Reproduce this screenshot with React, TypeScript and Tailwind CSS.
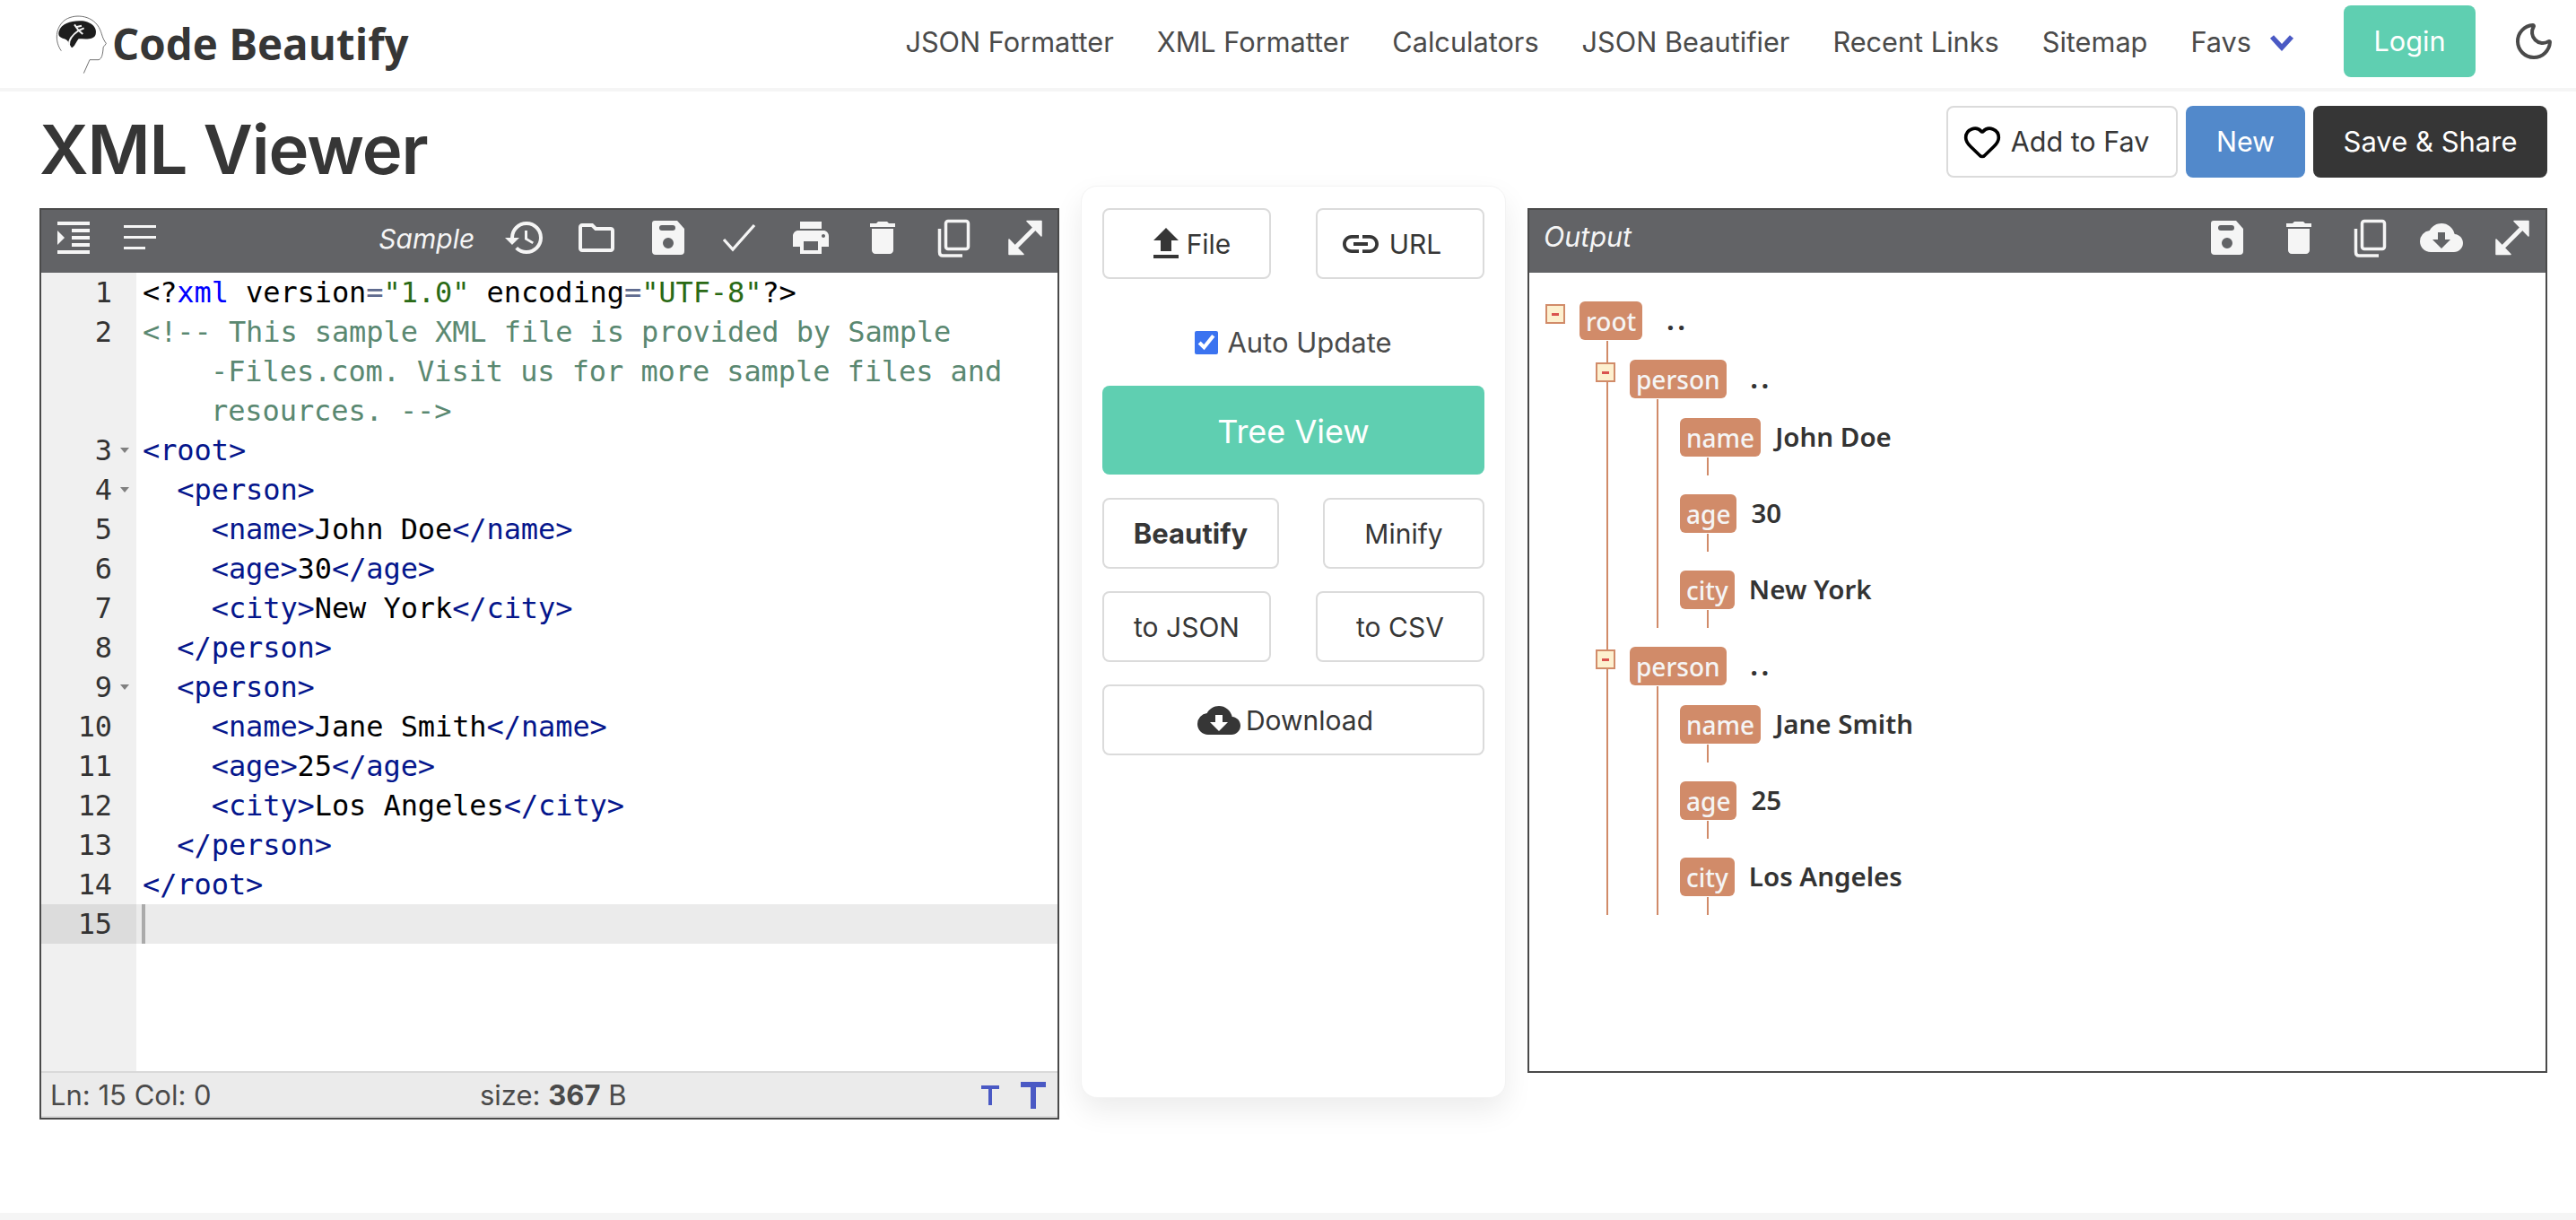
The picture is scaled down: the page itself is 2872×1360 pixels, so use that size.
import { Heart, Moon } from 'lucide-react'
import {
  MdCloudDownload,
  MdDelete,
  MdFileUpload,
  MdFormatIndentIncrease,
  MdHistory,
  MdLink,
  MdOutlineFolder,
  MdPrint,
} from 'react-icons/md'
import type { ReactNode } from 'react'

const NAV = ['JSON Formatter', 'XML Formatter', 'Calculators', 'JSON Beautifier', 'Recent Links', 'Sitemap']

function Logo() {
  return (
    <div className="flex items-center">
      <svg width="70" height="80" viewBox="0 0 210 240" className="ml-[-1px] mt-[2px] shrink-0">
        <path d="M40 140 C18 110 18 60 55 35 C90 14 150 22 170 70 C178 88 176 96 190 115 C186 124 178 125 180 135 C178 152 176 166 165 170 L135 170 L115 215" fill="none" stroke="#555" strokeWidth="2.5" />
        <path d="M32 75 C40 50 70 40 100 40 C135 38 162 60 155 85 C150 105 120 100 98 100 C88 112 86 125 75 130 C66 118 66 106 50 100 C35 95 28 90 32 75Z" fill="#1d1d1d" />
        <path d="M66 120 C64 100 78 86 98 72 L84 52 M98 72 L116 64 M98 72 L112 84 M92 60 L108 56" fill="none" stroke="#f4f4f4" strokeWidth="6" />
      </svg>
      <span className="font-['Open_Sans'] text-[47.5px] font-bold leading-none text-[#363636]">Code Beautify</span>
    </div>
  )
}

function Navbar() {
  return (
    <nav className="flex h-[102px] shrink-0 items-start border-b-4 border-[#f5f5f5] pl-[56px] pr-[23px]">
      <div className="flex h-[98px] items-center">
        <Logo />
      </div>
      <div className="ml-auto flex h-[92px] items-center text-[30.7px] text-[#4a4a4a]">
        {NAV.map(n => (
          <span key={n} className="mr-[48px] pt-[3px]">{n}</span>
        ))}
        <span className="pt-[3px]">Favs</span>
        <svg width="28" height="20" viewBox="0 0 28 20" className="ml-[20px] mr-[55px] mt-[3px]">
          <path d="M3 3 L14 15 L25 3" fill="none" stroke="#4a59c4" strokeWidth="5.5" />
        </svg>
        <span className="mr-[41px] flex h-[80px] w-[147px] items-center justify-center rounded-[8px] bg-[#5fcfb1] text-white">Login</span>
        <Moon size={48} strokeWidth={2} className="text-[#4a4a4a]" />
      </div>
    </nav>
  )
}

function SaveIcon() {
  return (
    <svg width="48" height="48" viewBox="0 0 48 48">
      <path fillRule="evenodd" d="M9 5 H34 L42 14 V39 Q42 43 38 43 H10 Q6 43 6 39 V8 Q6 5 9 5Z M17 10 Q14 10 14 13 Q14 16 17 16 H29 Q32 16 32 13 Q32 10 29 10Z M24 24 A6 6 0 1 0 24 36 A6 6 0 1 0 24 24Z" fill="currentColor" />
    </svg>
  )
}

function CopyIcon() {
  return (
    <svg width="48" height="48" viewBox="0 0 48 48">
      <rect x="15.5" y="5.5" width="25" height="31" rx="2.5" fill="none" stroke="currentColor" strokeWidth="3.5" />
      <path d="M8.5 14 V40 Q8.5 44 12 44 H34" fill="none" stroke="currentColor" strokeWidth="3.5" />
    </svg>
  )
}

function ExpandIcon() {
  return (
    <svg width="48" height="48" viewBox="0 0 48 48">
      <path d="M12 36 L36 12" stroke="currentColor" strokeWidth="5" />
      <path d="M42 5.5 V22 L26 5.5Z M6 42.5 V26 L22 42.5Z" fill="currentColor" stroke="currentColor" strokeWidth="1.5" strokeLinejoin="round" />
    </svg>
  )
}

function ThinCheck() {
  return (
    <svg width="48" height="48" viewBox="0 0 48 48">
      <path d="M7 26 L17 37 L41 10" fill="none" stroke="currentColor" strokeWidth="3.2" />
    </svg>
  )
}

function AlignIcon() {
  return (
    <svg width="36" height="30" viewBox="0 0 36 30">
      <rect x="0" y="1" width="36" height="3" fill="currentColor" />
      <rect x="0" y="13" width="36" height="3" fill="currentColor" />
      <rect x="0" y="25" width="24" height="3" fill="currentColor" />
    </svg>
  )
}

const Tag = ({ children }: { children: ReactNode }) => <span className="text-[#05168c]">{children}</span>

const CODE: ReactNode[] = [
  <>
    {'<?'}<span className="text-[#0000ff]">xml</span> version<span className="text-[#5f6b8f]">=</span>
    <span className="text-[#2a6a15]">"1.0"</span> encoding<span className="text-[#5f6b8f]">=</span>
    <span className="text-[#2a6a15]">"UTF-8"</span>{'?>'}
  </>,
  <span className="text-[#5a8871]">{'<!-- This sample XML file is provided by Sample'}</span>,
  <span className="pl-[76px] text-[#5a8871]">{'-Files.com. Visit us for more sample files and'}</span>,
  <span className="pl-[76px] text-[#5a8871]">{'resources. -->'}</span>,
  <Tag>{'<root>'}</Tag>,
  <Tag>{'  <person>'}</Tag>,
  <><Tag>{'    <name>'}</Tag>John Doe<Tag>{'</name>'}</Tag></>,
  <><Tag>{'    <age>'}</Tag>30<Tag>{'</age>'}</Tag></>,
  <><Tag>{'    <city>'}</Tag>New York<Tag>{'</city>'}</Tag></>,
  <Tag>{'  </person>'}</Tag>,
  <Tag>{'  <person>'}</Tag>,
  <><Tag>{'    <name>'}</Tag>Jane Smith<Tag>{'</name>'}</Tag></>,
  <><Tag>{'    <age>'}</Tag>25<Tag>{'</age>'}</Tag></>,
  <><Tag>{'    <city>'}</Tag>Los Angeles<Tag>{'</city>'}</Tag></>,
  <Tag>{'  </person>'}</Tag>,
  <Tag>{'</root>'}</Tag>,
]

const GUTTER = ['1', '2', '', '', '3', '4', '5', '6', '7', '8', '9', '10', '11', '12', '13', '14']
const FOLDS = ['3', '4', '9']

function Editor() {
  return (
    <div className="mt-[25px] flex h-[1016px] w-[1137px] shrink-0 flex-col border-2 border-[#4a4a4a]">
      <div className="flex h-[70px] shrink-0 items-start bg-[#626366] pl-[12px] pr-[12px] pt-[7px] text-[#f5f5f5]">
        <MdFormatIndentIncrease size={48} />
        <div className="ml-[32px] mt-[9px]"><AlignIcon /></div>
        <span className="ml-auto mr-[32px] mt-[3px] font-['Inter'] text-[30px] italic">Sample</span>
        <div className="flex gap-[31.7px]">
          <MdHistory size={48} />
          <MdOutlineFolder size={48} />
          <SaveIcon />
          <ThinCheck />
          <MdPrint size={48} />
          <MdDelete size={48} />
          <CopyIcon />
          <ExpandIcon />
        </div>
      </div>
      <div className="flex min-h-0 flex-1 font-['DejaVu_Sans_Mono'] text-[32px] leading-[44px] tracking-[-0.09px]">
        <div className="w-[106px] shrink-0 bg-[#f0f0f0] text-[#333]">
          {GUTTER.map((g, i) => (
            <div key={i} className="relative h-[44px] pr-[27px] text-right">
              {g}
              {FOLDS.includes(g) && (
                <svg width="10" height="6" viewBox="0 0 10 6" className="absolute left-[88px] top-[19px]">
                  <path d="M0 0 H10 L5 6Z" fill="#808080" />
                </svg>
              )}
            </div>
          ))}
          <div className="h-[44px] bg-[#dcdcdc] pr-[27px] text-right">15</div>
        </div>
        <div className="min-w-0 flex-1 bg-white text-black">
          {CODE.map((c, i) => (
            <div key={i} className="h-[44px] whitespace-pre pl-[7px]">{c}</div>
          ))}
          <div className="flex h-[44px] bg-[#ebebeb] pl-[6px]">
            <span className="h-[44px] w-[4px] bg-[#aaaaaa]" />
          </div>
        </div>
      </div>
      <div className="flex h-[52px] shrink-0 items-center border-y-2 border-t-[#d9d9d9] border-b-[#d9d9d9] bg-[#ebebeb] pl-[10px] pt-[2px] text-[31px] text-[#4a4a4a]">
        <span className="w-[479px]">Ln: 15 Col: 0</span>
        <span>size: <b className="font-bold">367</b> B</span>
        <svg width="20" height="22" viewBox="0 0 20 22" className="ml-auto">
          <path d="M0 0 H20 V4 H12 V22 H8 V4 H0Z" fill="#4a59c4" />
        </svg>
        <svg width="28" height="30" viewBox="0 0 28 30" className="ml-[24px] mr-[13px]">
          <path d="M0 0 H28 V6 H17 V30 H11 V6 H0Z" fill="#4a59c4" />
        </svg>
      </div>
    </div>
  )
}

const BTN = 'flex h-[79px] items-center justify-center rounded-[8px] border-2 border-[#dbdbdb] bg-white pt-[1px] text-[30px] text-[#363636]'

function Controls() {
  return (
    <div className="ml-[24px] flex h-[1017px] w-[474px] shrink-0 flex-col rounded-[18px] border border-[#f3f3f3] bg-white px-[23px] pt-[24px] font-['Inter'] shadow-[0_14px_32px_rgba(0,0,0,0.08)]">
      <div className="flex justify-between">
        <div className={`${BTN} w-[188px] pl-[3px]`}>
          <MdFileUpload size={48} className="ml-[-1px] mr-[-1px]" />
          <span className="mt-[1px]">File</span>
        </div>
        <div className={`${BTN} w-[188px] pr-[22px]`}>
          <MdLink size={48} className="mr-[8px]" />
          <span className="mt-[1px]">URL</span>
        </div>
      </div>
      <label className="mt-[57px] flex h-[26px] items-center justify-center pt-[2px] text-[31px] text-[#4a4a4a]">
        <input type="checkbox" defaultChecked className="m-0 mr-[10px] h-[26px] w-[26px] accent-[#3b73f0]" />
        Auto Update
      </label>
      <div className="mt-[36px] flex h-[99px] items-center justify-center rounded-[8px] bg-[#5fcfb1] pt-[2px] text-[36px] text-white">Tree View</div>
      <div className="mt-[26px] flex justify-between">
        <div className={`${BTN} w-[197px] text-[31px] font-bold`}>Beautify</div>
        <div className={`${BTN} w-[180px]`}>Minify</div>
      </div>
      <div className="mt-[25px] flex justify-between">
        <div className={`${BTN} w-[188px]`}>to JSON</div>
        <div className={`${BTN} w-[188px]`}>to CSV</div>
      </div>
      <div className={`${BTN} mt-[25px] pr-[18px]`}>
        <MdCloudDownload size={48} className="mr-[6px]" />
        Download
      </div>
    </div>
  )
}

function Toggle() {
  return (
    <span className="absolute left-[-38px] top-[3px] flex h-[22px] w-[22px] items-center justify-center border-2 border-[#d18b69] bg-[#fdf0cf]">
      <span className="h-[3px] w-[8px] bg-[#d9534f]" />
    </span>
  )
}

function TagBox({ children }: { children: ReactNode }) {
  return <span className="flex h-[43px] items-center rounded-[6px] bg-[#d18b69] px-[7px] text-[28px] font-medium text-[#f5f5f5]">{children}</span>
}

function Branch({ name, children }: { name: string; children: ReactNode }) {
  return (
    <div>
      <div className="relative flex h-[43px] items-center">
        <Toggle />
        <TagBox>{name}</TagBox>
        <span className="ml-[27px] font-bold tracking-[4px]">..</span>
      </div>
      <div className="ml-[30px] mt-[1px] flex flex-col gap-[21px] border-l-2 border-[#d18b69] pl-[24px] pt-[21px]">{children}</div>
    </div>
  )
}

function Leaf({ name, value }: { name: string; value: string }) {
  return (
    <div>
      <div className="flex h-[43px] items-center">
        <TagBox>{name}</TagBox>
        <span className="ml-[16px] font-semibold">{value}</span>
      </div>
      <div className="ml-[30px] mt-[1px] h-[20px] w-[2px] bg-[#d18b69]" />
    </div>
  )
}

function Output() {
  return (
    <div className="ml-[24px] mt-[25px] flex h-[964px] min-w-0 flex-1 flex-col border-2 border-[#4a4a4a]">
      <div className="flex h-[70px] shrink-0 items-start bg-[#626366] pl-[16px] pr-[13px] pt-[7px] text-[#f5f5f5]">
        <span className="font-['Inter'] text-[30.5px] italic">Output</span>
        <div className="ml-auto flex gap-[31.4px]">
          <SaveIcon />
          <MdDelete size={48} />
          <CopyIcon />
          <MdCloudDownload size={48} />
          <ExpandIcon />
        </div>
      </div>
      <div className="flex-1 bg-white pl-[56px] pt-[32px] font-['Noto_Sans'] text-[29.5px] text-[#333]">
        <Branch name="root">
          <Branch name="person">
            <Leaf name="name" value="John Doe" />
            <Leaf name="age" value="30" />
            <Leaf name="city" value="New York" />
          </Branch>
          <Branch name="person">
            <Leaf name="name" value="Jane Smith" />
            <Leaf name="age" value="25" />
            <Leaf name="city" value="Los Angeles" />
          </Branch>
        </Branch>
      </div>
    </div>
  )
}

export default function App() {
  return (
    <div className="flex h-[1360px] flex-col overflow-hidden bg-white font-['Inter'] text-[#363636]">
      <Navbar />
      <div className="flex h-[105px] shrink-0 items-start justify-between pl-[44px] pr-[32px]">
        <h1 className="mt-[18px] text-[76px] font-semibold leading-[92px] tracking-[-1.1px] text-[#363636]">XML Viewer</h1>
        <div className="mt-[16px] flex gap-[9px] text-[30.5px]">
          <div className="flex h-[80px] w-[258px] items-center justify-center rounded-[8px] border-2 border-[#dbdbdb] bg-white pr-[14px]">
            <Heart size={44} strokeWidth={2} className="mr-[10px] text-black" />
            Add to Fav
          </div>
          <div className="flex h-[80px] w-[133px] items-center justify-center rounded-[8px] bg-[#5289cb] text-white">New</div>
          <div className="flex h-[80px] w-[261px] items-center justify-center rounded-[8px] bg-[#363636] text-[31px] text-white">Save &amp; Share</div>
        </div>
      </div>
      <main className="flex min-h-0 flex-1 items-start pl-[44px] pr-[32px]">
        <Editor />
        <Controls />
        <Output />
      </main>
      <div className="h-[8px] shrink-0 bg-[#f5f5f5]" />
    </div>
  )
}
